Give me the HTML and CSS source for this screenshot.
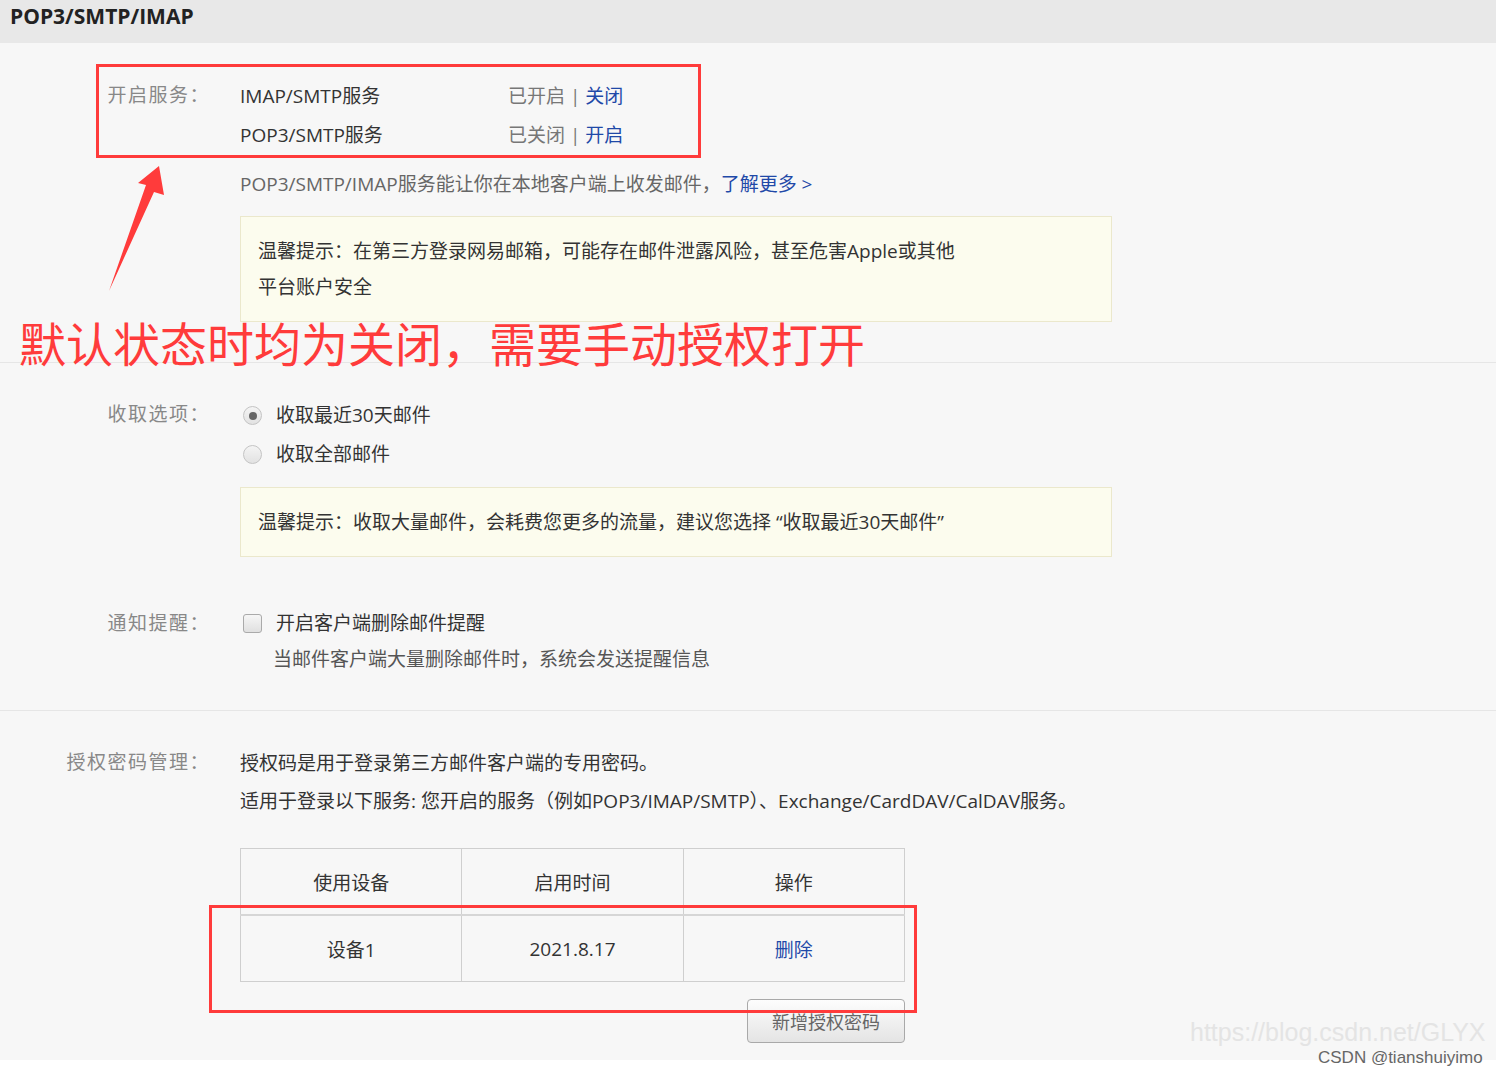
FILE: index.html
```html
<!DOCTYPE html>
<html lang="zh-CN">
<head>
    <meta charset="UTF-8">
    <meta name="viewport" content="width=device-width, initial-scale=1.0">
    <title>POP3/SMTP/IMAP</title>
    <link rel="stylesheet" href="styles.css">
</head>
<body>
    <div class="page">
        <div class="page__header">POP3/SMTP/IMAP</div>

        <div class="section section--services">
            <div class="field">
                <div class="field__label">开启服务：</div>
                <div class="field__body">
                    <div class="service">
                        <span class="service__name">IMAP/SMTP服务</span>
                        <span class="service__state">已开启 | <a class="link">关闭</a></span>
                    </div>
                    <div class="service">
                        <span class="service__name">POP3/SMTP服务</span>
                        <span class="service__state">已关闭 | <a class="link">开启</a></span>
                    </div>
                    <div class="desc">POP3/SMTP/IMAP服务能让你在本地客户端上收发邮件，<a class="link">了解更多 &gt;</a></div>
                    <div class="tip tip--two">温馨提示：在第三方登录网易邮箱，可能存在邮件泄露风险，甚至危害Apple或其他<br>平台账户安全</div>
                </div>
            </div>
        </div>

        <div class="section section--options">
            <div class="field">
                <div class="field__label">收取选项：</div>
                <div class="field__body">
                    <div class="option"><span class="radio radio--checked"></span>收取最近30天邮件</div>
                    <div class="option"><span class="radio"></span>收取全部邮件</div>
                    <div class="tip tip--one">温馨提示：收取大量邮件，会耗费您更多的流量，建议您选择 “收取最近30天邮件”</div>
                </div>
            </div>
            <div class="field field--notify">
                <div class="field__label">通知提醒：</div>
                <div class="field__body">
                    <div class="option option--dark"><span class="checkbox"></span>开启客户端删除邮件提醒</div>
                    <div class="hint">当邮件客户端大量删除邮件时，系统会发送提醒信息</div>
                </div>
            </div>
        </div>

        <div class="section section--auth">
            <div class="field">
                <div class="field__label">授权密码管理：</div>
                <div class="field__body">
                    <div class="line">授权码是用于登录第三方邮件客户端的专用密码。</div>
                    <div class="line">适用于登录以下服务: 您开启的服务（例如POP3/IMAP/SMTP）、Exchange/CardDAV/CalDAV服务。</div>
                    <div class="devices-box">
                        <table class="devices">
                            <tr class="devices__head">
                                <td>使用设备</td>
                                <td>启用时间</td>
                                <td>操作</td>
                            </tr>
                            <tr>
                                <td>设备1</td>
                                <td>2021.8.17</td>
                                <td><a class="link">删除</a></td>
                            </tr>
                        </table>
                        <button class="btn">新增授权密码</button>
                    </div>
                </div>
            </div>
        </div>

        <!-- annotations drawn over the screenshot -->
        <div class="mark mark--services"></div>
        <div class="mark mark--device"></div>
        <svg class="arrow" width="80" height="140" viewBox="100 160 80 140">
            <polygon points="159,166 164,195 154,192 109,291 146,185 138,183" fill="#ff3b3b"/>
        </svg>
        <div class="note">默认状态时均为关闭，需要手动授权打开</div>
        <div class="watermark">https://blog.csdn.net/GLYX</div>
    </div>
    <div class="credit">CSDN @tianshuiyimo</div>
</body>
</html>
```

FILE: styles.css
```css
body {
    margin: 0;
    background-color: #fff;
    font-family: "Open Sans", "Noto Sans CJK SC", sans-serif;
    font-size: 19px;
    color: #333;
    overflow: hidden;
}

.page {
    position: relative;
    background-color: #f7f7f7;
    height: 1060px;
    overflow: hidden;
}

.page__header {
    height: 43px;
    line-height: 33px;
    padding-left: 10px;
    background-color: #e8e8e8;
    font-weight: bold;
    font-size: 21px;
    color: #222;
}

.section {
    border-bottom: 1px solid #e6e6e6;
}

.section--services {
    padding: 34px 0 40px;
}

.section--options {
    padding: 33px 0 34px;
}

.section--auth {
    padding: 33px 0 17px;
    border-bottom: none;
}

.field {
    display: flex;
}

.field__label {
    width: 210px;
    flex: none;
    text-align: right;
    line-height: 36px;
    letter-spacing: 1.5px;
    color: #888;
}

.field__body {
    margin-left: 30px;
}

.service {
    display: flex;
    line-height: 39px;
}

.service__name {
    width: 268px;
}

.service__state {
    color: #777;
}

.link {
    color: #1f49a8;
    cursor: pointer;
}

.desc {
    margin-top: 10px;
    line-height: 39px;
    color: #666;
}

.tip {
    width: 836px;
    padding: 16px 17px;
    background-color: #fcfcee;
    border: 1px solid #ebe8cc;
    line-height: 36px;
    color: #333;
}

.tip--two {
    margin-top: 12px;
}

.tip--one {
    margin-top: 13px;
}

.option {
    display: flex;
    align-items: center;
    line-height: 39px;
    color: #333;
}

.radio {
    width: 17px;
    height: 17px;
    margin: 0 14px 0 3px;
    border: 1px solid #c4c4c4;
    border-radius: 50%;
    background: linear-gradient(#f4f4f4, #e2e2e2);
    display: flex;
    align-items: center;
    justify-content: center;
}

.radio--checked::after {
    content: "";
    width: 8px;
    height: 8px;
    border-radius: 50%;
    background-color: #666;
}

.checkbox {
    width: 17px;
    height: 17px;
    margin: 0 14px 0 3px;
    border: 1px solid #aaa;
    border-radius: 3px;
    background: linear-gradient(#f6f6f6, #e0e0e0);
}

.field--notify {
    margin-top: 47px;
}

.field--notify .field__label {
    line-height: 39px;
}

.hint {
    padding-left: 33px;
    line-height: 33px;
    color: #555;
}

.line {
    line-height: 38px;
}

.devices-box {
    display: flex;
    flex-direction: column;
    align-items: flex-end;
    width: 665px;
    margin-top: 28px;
}

.devices {
    width: 665px;
    border-collapse: collapse;
    text-align: center;
}

.devices td {
    width: 33.3%;
    height: 65px;
    border: 1px solid #cfcfcf;
    padding: 0;
}

.devices__head td {
    border-bottom: 2px solid #d6d6d6;
}

.btn {
    width: 158px;
    height: 44px;
    margin-top: 17px;
    border: 1px solid #a9a9a9;
    border-radius: 4px;
    background: linear-gradient(#fdfdfd, #e4e4e4);
    font-family: inherit;
    font-size: 18px;
    color: #666;
}

.mark {
    position: absolute;
    border: 3px solid #ff3b3b;
}

.mark--services {
    left: 96px;
    top: 64px;
    width: 599px;
    height: 88px;
}

.mark--device {
    left: 209px;
    top: 905px;
    width: 702px;
    height: 102px;
}

.arrow {
    position: absolute;
    left: 100px;
    top: 160px;
}

.note {
    position: absolute;
    left: 19px;
    top: 310px;
    font-family: "Noto Sans CJK SC", sans-serif;
    font-size: 47px;
    line-height: 64px;
    color: #ff3b3b;
    white-space: nowrap;
}

.watermark {
    position: absolute;
    left: 1190px;
    top: 1016px;
    font-family: "Liberation Sans", Arial, sans-serif;
    font-size: 25px;
    line-height: 32px;
    color: #e4e4e4;
    white-space: nowrap;
}

.credit {
    position: absolute;
    left: 1318px;
    top: 1048px;
    font-family: "Liberation Sans", Arial, sans-serif;
    font-size: 17px;
    line-height: 19px;
    color: #666;
}
```
